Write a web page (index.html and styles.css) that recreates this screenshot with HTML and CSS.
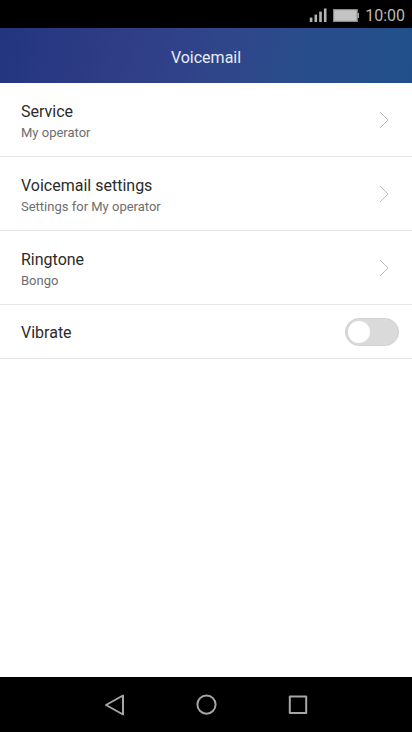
FILE: index.html
```
<!DOCTYPE html>
<html lang="en">
<head>
    <meta charset="UTF-8">
    <meta name="viewport" content="width=device-width, initial-scale=1.0">
    <title>Voicemail</title>
    <link rel="stylesheet" href="styles.css">
</head>
<body>
    <div class="status-bar">
        <svg class="signal" width="18" height="14" viewBox="0 0 18 14" fill="#b4b4b4" aria-hidden="true">
            <rect x="0.8" y="9.6" width="2.6" height="4.4"/>
            <rect x="5.5" y="6.6" width="2.6" height="7.4"/>
            <rect x="10.2" y="3.6" width="2.6" height="10.4"/>
            <rect x="14.9" y="0.5" width="2.6" height="13.5"/>
        </svg>
        <svg class="battery" width="26" height="13" viewBox="0 0 26 13" aria-hidden="true">
            <rect x="0.6" y="0.6" width="23.6" height="11.8" fill="#c4c4c4" stroke="#8c8c8c" stroke-width="1.2"/>
            <rect x="24.6" y="4" width="1.4" height="5" fill="#a8a8a8"/>
        </svg>
        <span class="clock">10:00</span>
    </div>

    <header class="title-bar">
        <h1>Voicemail</h1>
    </header>

    <main class="settings">
        <a class="row" href="#service">
            <span class="row-text">
                <span class="row-title">Service</span>
                <span class="row-summary">My operator</span>
            </span>
            <svg class="chevron" width="10" height="18" viewBox="0 0 10 18" aria-hidden="true"><path d="M1 1l8 8-8 8"/></svg>
        </a>
        <a class="row" href="#voicemail-settings">
            <span class="row-text">
                <span class="row-title">Voicemail settings</span>
                <span class="row-summary">Settings for My operator</span>
            </span>
            <svg class="chevron" width="10" height="18" viewBox="0 0 10 18" aria-hidden="true"><path d="M1 1l8 8-8 8"/></svg>
        </a>
        <a class="row" href="#ringtone">
            <span class="row-text">
                <span class="row-title">Ringtone</span>
                <span class="row-summary">Bongo</span>
            </span>
            <svg class="chevron" width="10" height="18" viewBox="0 0 10 18" aria-hidden="true"><path d="M1 1l8 8-8 8"/></svg>
        </a>
        <div class="row row-switch">
            <label class="row-text" for="vibrate">
                <span class="row-title">Vibrate</span>
            </label>
            <input class="switch" type="checkbox" role="switch" id="vibrate">
        </div>
    </main>

    <nav class="nav-bar">
        <button type="button" aria-label="Back">
            <svg width="24" height="24" viewBox="0 0 24 24"><path d="M21 2.5v19L4 12z"/></svg>
        </button>
        <button type="button" aria-label="Home">
            <svg width="24" height="24" viewBox="0 0 24 24"><circle cx="12.5" cy="11.6" r="9.1"/></svg>
        </button>
        <button type="button" aria-label="Recent apps">
            <svg width="24" height="24" viewBox="0 0 24 24"><rect x="3.8" y="3.6" width="16.4" height="16.4"/></svg>
        </button>
    </nav>
</body>
</html>
```
FILE: styles.css
```
* {
    box-sizing: border-box;
}
body {
    margin: 0;
    min-height: 100vh;
    display: flex;
    flex-direction: column;
    background-color: #fff;
    color: #2b2b2b;
    font-family: Roboto, "Liberation Sans", sans-serif;
}
.status-bar {
    display: flex;
    align-items: center;
    justify-content: flex-end;
    gap: 6px;
    height: 28px;
    padding: 2px 7px 0 0;
    background-color: #000;
}
.clock {
    padding-top: 2px;
    color: #b8b8b8;
    font-size: 16px;
    line-height: 20px;
}
.title-bar {
    display: flex;
    align-items: center;
    justify-content: center;
    height: 55px;
    padding-top: 4px;
    background: linear-gradient(105deg, #23357f 0%, #2f3c86 28%, #30458a 52%, #294d8b 74%, #205089 100%);
}
.title-bar h1 {
    margin: 0;
    color: #e9ecf6;
    font-size: 16px;
    font-weight: 400;
    line-height: 20px;
}
.settings {
    flex: 1;
}
.row {
    display: flex;
    align-items: center;
    justify-content: space-between;
    padding: 15px 23px 14px 21px;
    border-bottom: 1px solid #e6e6e6;
    color: inherit;
    text-decoration: none;
}
.row-text {
    display: flex;
    flex-direction: column;
    padding-top: 2px;
}
.row-title {
    font-size: 16px;
    line-height: 24px;
}
.row-summary {
    color: #6e6e6e;
    font-size: 13px;
    line-height: 18px;
}
.chevron {
    fill: none;
    stroke: #bdbdbd;
    stroke-width: 1;
}
.row-switch {
    padding: 13px 13px 12px 21px;
}
.switch {
    appearance: none;
    display: flex;
    align-items: center;
    width: 54px;
    height: 28px;
    margin: 0;
    padding: 0 2px;
    border: 1px solid #d0d0d0;
    border-radius: 14px;
    background-color: #dadada;
    cursor: pointer;
}
.switch::before {
    content: "";
    width: 22px;
    height: 22px;
    border-radius: 50%;
    background-color: #fff;
}
.switch:checked {
    justify-content: flex-end;
    background-color: #30458a;
}
.nav-bar {
    display: flex;
    align-items: center;
    justify-content: center;
    gap: 44px;
    height: 55px;
    background-color: #000;
}
.nav-bar button {
    display: flex;
    justify-content: center;
    width: 48px;
    padding: 0;
    border: none;
    background: none;
    cursor: pointer;
}
.nav-bar svg {
    fill: none;
    stroke: #a6a6a6;
    stroke-width: 2;
    stroke-linejoin: round;
}
```
